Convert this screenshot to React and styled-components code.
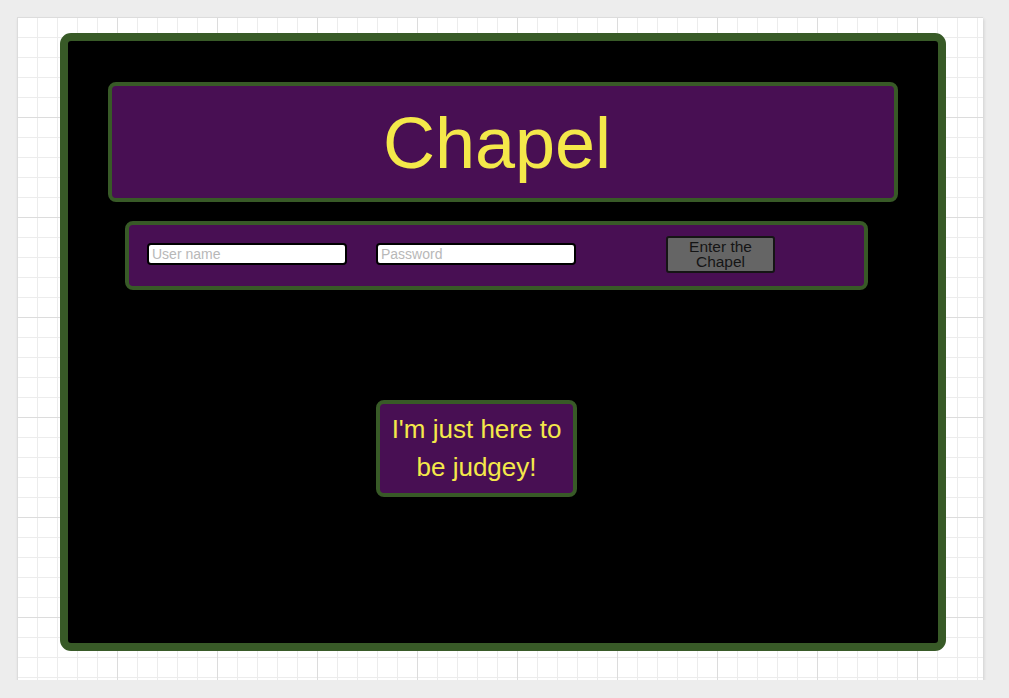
import React from 'react'
import styled, { createGlobalStyle } from 'styled-components'

const GlobalStyle = createGlobalStyle`
  * { box-sizing: border-box; }
  body {
    margin: 0;
    background: #ededed;
    font-family: "Liberation Sans", Arial, sans-serif;
  }
`

const GridSheet = styled.div`
  margin: 17px 0 0 17px;
  width: 966px;
  height: 663px;
  padding: 16px 0 0 43px;
  background-color: #fff;
  background-image:
    linear-gradient(to right, #dcdcdc 1px, transparent 1px),
    linear-gradient(to bottom, #dcdcdc 1px, transparent 1px),
    linear-gradient(to right, #ececec 1px, transparent 1px),
    linear-gradient(to bottom, #ececec 1px, transparent 1px);
  background-size: 100px 100px, 100px 100px, 20px 20px, 20px 20px;
  box-shadow: 1px 2px 3px rgba(0, 0, 0, 0.12);
`

const Panel = styled.div`
  width: 886px;
  height: 618px;
  padding-top: 41px;
  background: #000;
  border: 8px solid #385a27;
  border-radius: 11px;
`

const PurpleBox = styled.div`
  background: #480f53;
  border: 4px solid #385a27;
  border-radius: 8px;
`

const TitleBox = styled(PurpleBox)`
  margin: 0 40px;
  height: 120px;
  padding: 2px 12px 0 0;
  display: flex;
  align-items: center;
  justify-content: center;
`

const Title = styled.h1`
  margin: 0;
  font-size: 72px;
  font-weight: normal;
  color: #f4e84a;
`

const LoginForm = styled(PurpleBox).attrs({ as: 'form' })`
  margin: 19px 0 0 57px;
  width: 743px;
  height: 69px;
  padding: 0 0 3px 18px;
  display: flex;
  align-items: center;
`

const Field = styled.input`
  width: 200px;
  height: 22px;
  margin-right: ${p => p.$gap}px;
  padding: 0 3px;
  border: 2px solid #000;
  border-radius: 4px;
  background: #fff;
  font-family: "Liberation Sans", Arial, sans-serif;
  font-size: 14px;
  &::placeholder { color: #b8b8b8; }
`

const EnterButton = styled.button`
  width: 109px;
  height: 37px;
  padding: 0;
  background: #656565;
  border: 2px solid #151515;
  border-radius: 3px;
  color: #151515;
  font-family: "Liberation Sans", Arial, sans-serif;
  font-size: 15.5px;
  line-height: 15.5px;
`

const JudgeyBox = styled(PurpleBox)`
  margin: 110px 0 0 308px;
  width: 201px;
  height: 97px;
  padding: 6px 2px 0;
  text-align: center;
  color: #f4e84a;
  font-size: 26px;
  line-height: 38px;
`

export default function App() {
  return (
    <>
      <GlobalStyle />
      <GridSheet>
        <Panel>
          <TitleBox>
            <Title>Chapel</Title>
          </TitleBox>
          <LoginForm onSubmit={e => e.preventDefault()}>
            <Field type="text" placeholder="User name" $gap={29} />
            <Field type="password" placeholder="Password" $gap={90} />
            <EnterButton type="submit">Enter the<br />Chapel</EnterButton>
          </LoginForm>
          <JudgeyBox>I'm just here to be judgey!</JudgeyBox>
        </Panel>
      </GridSheet>
    </>
  )
}
